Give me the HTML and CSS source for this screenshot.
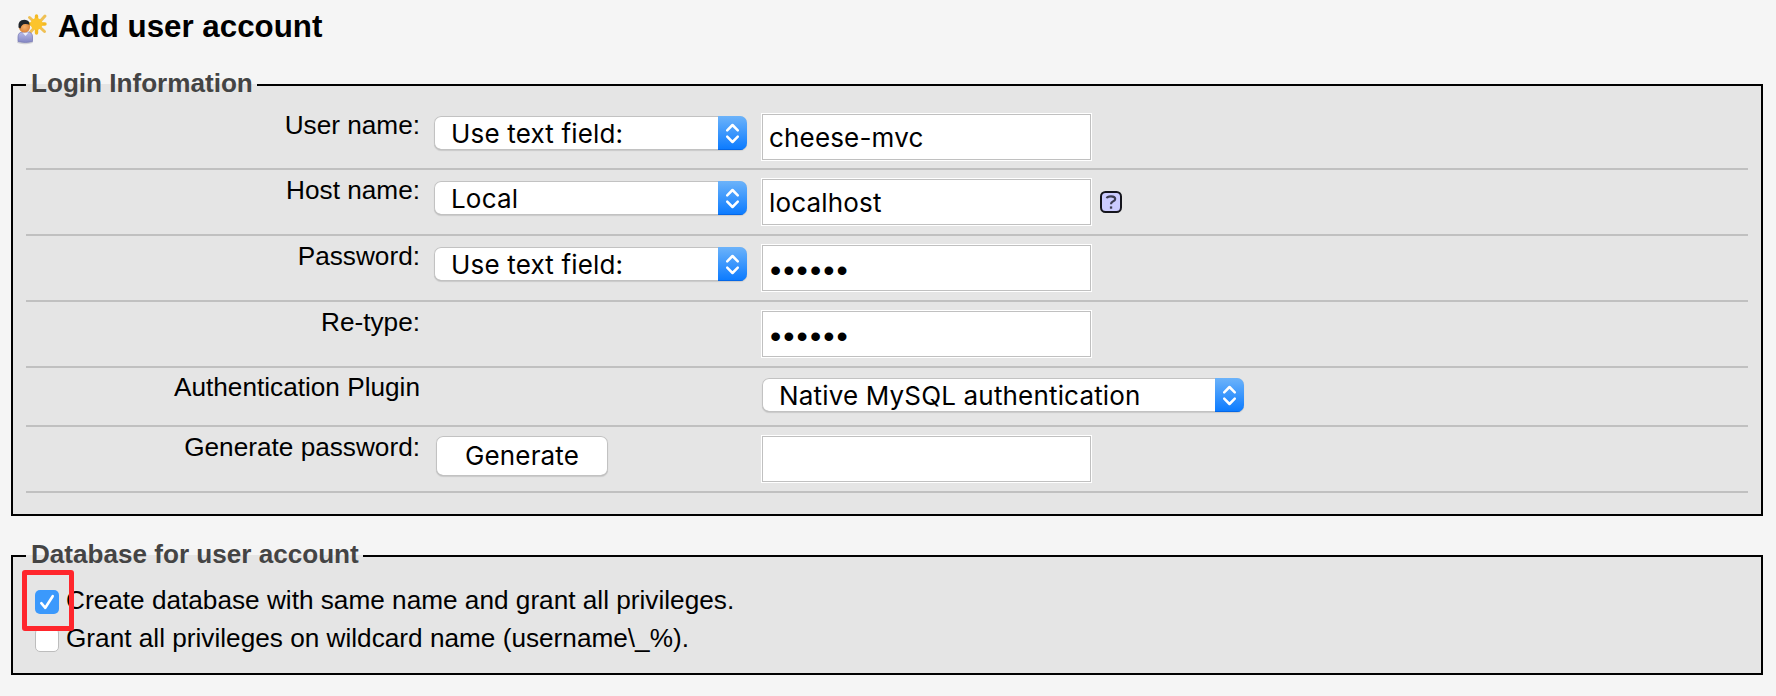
FILE: index.html
```html
<!DOCTYPE html>
<html lang="en">
<head>
<meta charset="utf-8">
<title>Add user account</title>
<link rel="stylesheet" href="styles.css">
</head>
<body>
<svg class="defs" width="0" height="0" aria-hidden="true">
  <symbol id="arrows" viewBox="0 0 29 34">
    <path d="M9.2 14.4 14.5 9l5.3 5.4M9.2 20.600l5.300 5.400 5.300-5.400" fill="none" stroke="#fff" stroke-width="2.500" stroke-linecap="round" stroke-linejoin="round"/>
  </symbol>
</svg>

<h2 class="title">
  <svg class="title-icon" viewBox="0 0 32 32" width="32" height="32" aria-hidden="true">
    <defs>
      <linearGradient id="shirt" x1="0" y1="0" x2="0" y2="1"><stop offset="0" stop-color="#b9bbe8"/><stop offset="1" stop-color="#8386c4"/></linearGradient>
      <radialGradient id="face"><stop offset="0" stop-color="#f7b06a"/><stop offset="1" stop-color="#d98238"/></radialGradient>
    </defs>
    <g stroke="#f3b924" stroke-width="3.400" stroke-linecap="round">
      <path d="M20.500 3v17M12.500 11h16.500"/>
    </g>
    <g stroke="#efc055" stroke-width="3" stroke-linecap="round">
      <path d="M13.500 4.500l15 14M29 3l-14.500 16"/>
    </g>
    <circle cx="20.500" cy="11" r="6" fill="#fcc42c"/>
    <ellipse cx="9" cy="29.200" rx="8" ry="2" fill="#b9b9c0" opacity=".6"/>
    <path d="M2 28.500v-4.500q0-5 5-5h4.500q5 0 5 5v4.500q-7 2-14.500 0z" fill="url(#shirt)" stroke="#7d80b8" stroke-width=".8"/>
    <path d="M6.500 19.500l3 3.500 3-3.500z" fill="#eceefb"/>
    <circle cx="8.500" cy="14" r="5.600" fill="url(#face)"/>
    <path d="M2.500 14.500Q1.500 7 8.500 6.800q5.200.2 5 5-2-1-4.500-.8-3.500 0-4.500 4.500z" fill="#20242a"/>
  </svg>
  <span>Add user account</span>
</h2>

<fieldset class="panel login">
  <legend>Login Information</legend>
  <div class="row first">
    <label class="label">User name:</label>
    <div class="select"><span>Use text field:</span><svg class="arrow"><use href="#arrows"/></svg></div>
    <div class="input">cheese-mvc</div>
  </div>
  <div class="row">
    <label class="label">Host name:</label>
    <div class="select"><span>Local</span><svg class="arrow"><use href="#arrows"/></svg></div>
    <div class="input">localhost</div>
    <svg class="help" viewBox="0 0 22 22" width="22" height="22" aria-label="Help">
      <rect x="1" y="1" width="20" height="20" rx="4.500" fill="#ccf" stroke="#15151d" stroke-width="2"/>
      <path d="M6.800 7.300q.4-2 4.200-2 4.200 0 4.200 2.700 0 1.700-2.300 2.500-1.900.7-1.900 2.700" fill="none" stroke="#3c3c50" stroke-width="2.200"/>
      <rect x="9.900" y="15.400" width="2.300" height="2.300" fill="#3c3c50"/>
    </svg>
  </div>
  <div class="row">
    <label class="label">Password:</label>
    <div class="select"><span>Use text field:</span><svg class="arrow"><use href="#arrows"/></svg></div>
    <div class="input secret">••••••</div>
  </div>
  <div class="row">
    <label class="label">Re-type:</label>
    <div class="input secret">••••••</div>
  </div>
  <div class="row plugin">
    <label class="label">Authentication Plugin</label>
    <div class="select wide"><span>Native MySQL authentication</span><svg class="arrow"><use href="#arrows"/></svg></div>
  </div>
  <div class="row">
    <label class="label">Generate password:</label>
    <button class="button" type="button">Generate</button>
    <div class="input"></div>
  </div>
</fieldset>

<fieldset class="panel database">
  <legend>Database for user account</legend>
  <div class="option">
    <span class="check checked"><svg viewBox="0 0 24 24" width="24" height="24"><path d="M6.300 13.200l4 4.600 7.400-11.600" fill="none" stroke="#fff" stroke-width="2.600" stroke-linecap="round" stroke-linejoin="round"/></svg></span>
    <label>Create database with same name and grant all privileges.</label>
    <span class="highlight"></span>
  </div>
  <div class="option">
    <span class="check"></span>
    <label>Grant all privileges on wildcard name (username\_%).</label>
  </div>
</fieldset>
</body>
</html>
```
FILE: styles.css
```css
* { box-sizing: border-box; }

body {
  margin: 0;
  padding: 0 13px 0 11px;
  background: #f5f5f5;
  color: #000;
  font: 26.2px/30px "Liberation Sans", Arial, sans-serif;
}

.defs { display: block; }

.title {
  display: flex;
  height: 70px;
  margin: 0;
  padding: 13px 0 0 5px;
  font-size: 31.3px;
  line-height: 28px;
}
.title-icon { flex: none; margin-right: 10px; }

.panel {
  margin: 0;
  border: 2px solid #000;
  background: #e5e5e5;
}
.panel legend {
  height: 30px;
  padding: 0 4px 4px 5px;
  color: #444;
  font-weight: bold;
  font-size: 26.1px;
  line-height: 26px;
}
.login { padding: 5px 13px 21px; }
.database { margin-top: 25px; padding: 10px 13px 16px; }

.row {
  display: grid;
  grid-template-columns: 395px 313px 331px auto;
  column-gap: 13px;
  align-items: start;
  height: 66px;
  border-bottom: 2px solid #c0c0c0;
}
.row.first { height: 65px; }
.row.plugin { height: 59px; }

.label {
  grid-column: 1;
  padding: 5px 1px 0 0;
  text-align: right;
}
.plugin .label { padding-top: 4px; }

.select, .input, .button {
  font-family: Inter, "Open Sans", sans-serif;
  font-size: 26px;
  letter-spacing: 0.17px;
}

.select {
  grid-column: 2;
  display: flex;
  justify-content: space-between;
  height: 34px;
  margin-top: 11px;
  padding-left: 17px;
  overflow: hidden;
  border-radius: 7px;
  background: #fff;
  box-shadow: inset 0 0 0 1px #c2c2c2, inset 0 -1px 0 #a9a9a9, 0 1px 1px rgba(0, 0, 0, .12);
  line-height: 36px;
}
.select.wide {
  grid-column: 3 / 5;
  width: 482px;
  margin: 10px 0 0 2px;
}
.arrow {
  width: 29px;
  height: 34px;
  background: linear-gradient(#6cb3fa, #0a7aff);
  box-shadow: inset 0 -1px 0 #0567e6;
}

.input {
  grid-column: 3;
  height: 48px;
  margin-top: 8px;
  padding-left: 7px;
  margin-left: 1px;
  width: 331px;
  border: 1px solid #fff;
  outline: 1px solid #c0c0c0;
  outline-offset: -2px;
  background: #fff;
  line-height: 48px;
}
.secret {
  padding-left: 8px;
  font-family: "Liberation Sans", Arial, sans-serif;
  font-size: 32px;
  line-height: 51px;
  letter-spacing: 2.1px;
}

.help { grid-column: 4; margin: 21px 0 0 -4px; }

.button {
  grid-column: 2;
  width: 172px;
  height: 40px;
  margin: 9px 0 0 2px;
  padding: 0;
  border: 0;
  border-radius: 7px;
  background: #fff;
  box-shadow: inset 0 0 0 1px #c2c2c2, inset 0 -1px 0 #a9a9a9, 0 1px 1px rgba(0, 0, 0, .12);
  color: #000;
  line-height: 40px;
}

.option {
  position: relative;
  display: flex;
  align-items: flex-start;
  gap: 7px;
  height: 38px;
  padding-left: 9px;
  line-height: 38px;
}
.check {
  width: 24px;
  height: 24px;
  margin-top: 9px;
  border: 1px solid #bdbdbd;
  border-radius: 5px;
  background: #fff;
}
.check.checked { border: 0; background: #3b99fc; }
.check svg { display: block; }

.highlight {
  position: absolute;
  z-index: 1;
  top: -11px;
  left: -4px;
  width: 52px;
  height: 61px;
  border: 5px solid #ff262c;
  border-radius: 3px;
}
```
